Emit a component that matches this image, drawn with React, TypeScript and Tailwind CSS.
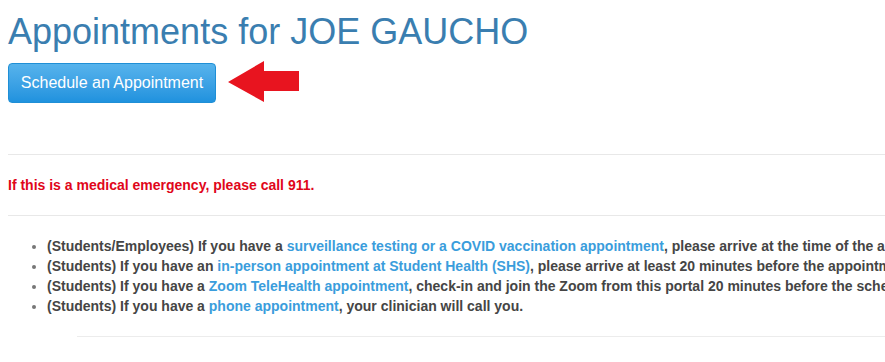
import React from "react";

export default function App() {
  const link = "text-[#3a9ddc]";
  return (
    <div className="w-[885px] h-[362px] overflow-hidden bg-white" style={{ fontFamily: '"Liberation Sans", Arial, sans-serif' }}>
      <div className="pl-2 w-[1200px]">
        <h1 className="mt-[12px] text-[36px] leading-[40px] font-normal text-[#3a7eb0]">Appointments for JOE GAUCHO</h1>
        <div className="mt-[11px] flex items-center">
          <button className="w-[208px] h-[40px] rounded-[4px] border border-[#1f8fd6] bg-gradient-to-b from-[#56b3ec] to-[#1f92de] text-white text-[16px] leading-none">
            Schedule an Appointment
          </button>
          <svg width="72" height="42" viewBox="0 0 72 42" className="ml-[12px] -mt-[3px]">
            <polygon points="0,21 36,0 36,10 71,10 71,30 36,30 36,41" fill="#e8141f" />
          </svg>
        </div>
        <hr className="mt-[51px] border-0 border-t border-[#e8e8e8]" />
        <p className="mt-[20px] text-[14px] leading-[20px] font-bold text-[#e0061a]">If this is a medical emergency, please call 911.</p>
        <hr className="mt-[20px] border-0 border-t border-[#e8e8e8]" />
        <ul className="mt-[20px] list-disc pl-[39px] text-[14px] leading-[20px] font-bold text-[#454545] whitespace-nowrap marker:text-[#777]">
          <li>(Students/Employees) If you have a <span className={link}>surveillance testing or a COVID vaccination appointment</span>, please arrive at the time of the appointment.</li>
          <li>(Students) If you have an <span className={link}>in-person appointment at Student Health (SHS)</span>, please arrive at least 20 minutes before the appointment time.</li>
          <li>(Students) If you have a <span className={link}>Zoom TeleHealth appointment</span>, check-in and join the Zoom from this portal 20 minutes before the scheduled time.</li>
          <li>(Students) If you have a <span className={link}>phone appointment</span>, your clinician will call you.</li>
        </ul>
        <hr className="mt-[20px] ml-[69px] border-0 border-t border-[#ececec]" />
      </div>
    </div>
  );
}
